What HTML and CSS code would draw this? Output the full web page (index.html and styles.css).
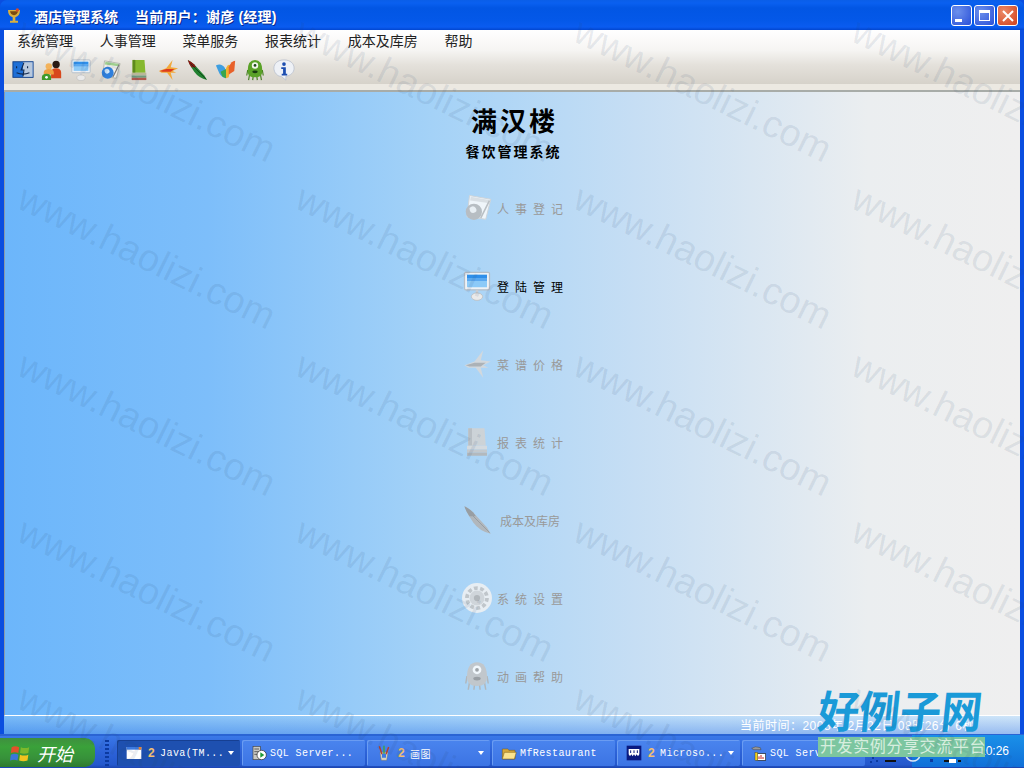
FILE: index.html
```html
<!DOCTYPE html>
<html>
  <head>
    <meta charset="utf-8">
    <title>酒店管理系统</title>
    <link rel="stylesheet" href="styles.css">
  </head>
  <body>
    <svg class="defs" width="0" height="0">
      <symbol id="i-finder" viewBox="0 0 24 24">
        <rect x="1" y="3" width="22" height="17" fill="#1f6fd6" stroke="#123e86"/>
        <rect x="12" y="3.5" width="10.5" height="16" fill="#b9c8dc"/>
        <path d="M13 4 10 12h3l-1 7" fill="none" stroke="#10284f" stroke-width="1.2"/>
        <path d="M5 8v2M17 8v2M5 15q7 3 14 0" fill="none" stroke="#10284f" stroke-width="1.2"/>
      </symbol>
      <symbol id="i-people" viewBox="0 0 24 24">
        <circle cx="16.500" cy="6" r="4" fill="#2a1a14"/>
        <path d="M11 21v-6q0-5 5.500-5t5.500 5v6z" fill="#d8481c"/>
        <circle cx="8.500" cy="8" r="3.500" fill="#f3b25a"/>
        <path d="M3 17v-2q0-4 5.500-4t5.500 4v2z" fill="#eea040"/>
        <path d="M1 23v-3q0-4 5-4t5 4v3z" fill="#3f9a2a"/>
        <circle cx="6" cy="20" r="1.500" fill="#fff"/>
      </symbol>
      <symbol id="i-monitor" viewBox="0 0 24 24">
        <rect x="2" y="1" width="20" height="14" rx="1" fill="#eef2f6" stroke="#b4bec8"/>
        <rect x="4" y="3" width="16" height="10" fill="#8ccaf8"/>
        <rect x="4" y="3" width="16" height="3" fill="#2f8fea"/>
        <rect x="4" y="6" width="16" height="2" fill="#5aa8f0"/>
        <rect x="11" y="15" width="2" height="3" fill="#c8ccd2"/>
        <ellipse cx="12" cy="20.500" rx="4.500" ry="3" fill="#eaeaea" stroke="#bcbcbc" stroke-width=".6"/>
      </symbol>
      <symbol id="i-notes" viewBox="0 0 24 24">
        <path d="M6 2 23 5 19 21 4 19z" fill="#f1f1ec" stroke="#a4a89c" stroke-width=".8"/>
        <path d="M7 3 22 5.500 21 8 6.500 6z" fill="#9fcf8f"/>
        <path d="M22 6 15 20" stroke="#777" stroke-width="1.300"/>
        <circle cx="9.500" cy="15" r="6.500" fill="#2e7fdc"/>
        <path d="M6 12q3-3 5 0t-2 4q-3 0-3-4" fill="#cfe6fb"/>
      </symbol>
      <symbol id="i-book" viewBox="0 0 24 24">
        <path d="M5 1h13l1 14H5z" fill="#86b82e"/>
        <path d="M5 1h3v14H5z" fill="#5e8a1c"/>
        <path d="M4 15h16v3H4z" fill="#b9b69a"/>
        <path d="M4 18h16v2.500H4z" fill="#6f9a7c"/>
        <path d="M4 20.500h16V23H4z" fill="#b0584c"/>
      </symbol>
      <symbol id="i-fish" viewBox="0 0 24 24">
        <path d="M2 13 10 10 17 1 15 9 23 10 17 13 21 15 15 15 17 23 11 15 5 15z" fill="#f2a83a"/>
        <path d="M3 13 10 11 19 11 15 14 6 14z" fill="#dd3b1e"/>
      </symbol>
      <symbol id="i-feather" viewBox="0 0 24 24">
        <path d="M2 1Q6 3 9 6L20 18 23 23Q14 21 9 14T2 1z" fill="#20802f"/>
        <path d="M2 1Q6 3 9 6L11 9 6 9Q3 5 2 1z" fill="#8c1414"/>
        <path d="M5 5 22 22" stroke="#0c3a14" stroke-width=".8"/>
      </symbol>
      <symbol id="i-msn" viewBox="0 0 24 24">
        <path d="M1 7Q7 4 11 10L12 21Q6 20 4 14z" fill="#3f9fe0"/>
        <path d="M6 14 12 11 12 21 8 19z" fill="#3aa64a"/>
        <path d="M12 10Q15 4 17 8L15 20 12 21z" fill="#f3b030"/>
        <path d="M15 9Q18 2 22 2L21 13 15 17z" fill="#e8612a"/>
      </symbol>
      <symbol id="i-mike" viewBox="0 0 24 24">
        <path d="M6 17 5 23M10 19 9.500 23M14 19 14.500 23M18 17 19 23M4 12 3 18M20 12 21 18" stroke="#3f7a1a" stroke-width="1.200"/>
        <path d="M4 13Q4 1 12 1t8 12q0 7-8 7t-8-7z" fill="#5aa228"/>
        <circle cx="12" cy="7" r="3.500" fill="#f2f6ee"/>
        <circle cx="12" cy="7" r="1.500" fill="#1b4a18"/>
        <ellipse cx="12" cy="14" rx="3" ry="1.500" fill="#173a10"/>
      </symbol>
      <symbol id="i-info" viewBox="0 0 24 24">
        <path d="M12 1C5 1 1 5 1 10s4 9 8 9l5 4v-4c5-1 9-4 9-9S19 1 12 1z" fill="#eef1f6" stroke="#b4bccb" stroke-width=".8"/>
        <circle cx="12" cy="5.500" r="2" fill="#1d4eb0"/>
        <path d="M9 9h5v7h1.500v2h-6v-2H11v-5H9z" fill="#1d4eb0"/>
      </symbol>
      <symbol id="i-gear" viewBox="0 0 24 24">
        <circle cx="12" cy="12" r="12" fill="#e0e0e0"/>
        <circle cx="12" cy="12" r="8" fill="none" stroke="#888" stroke-width="3" stroke-dasharray="3 2"/>
        <circle cx="12" cy="12" r="6" fill="#aaa"/>
        <circle cx="12" cy="12" r="2.500" fill="#666"/>
      </symbol>
      <symbol id="i-trophy" viewBox="0 0 24 24">
        <path d="M3 3h18q0 9-7 11v5h4v3H6v-3h4v-5Q3 12 3 3z" fill="#d8b040"/>
        <path d="M6 5h12q-1 5-6 6-5-1-6-6z" fill="#7a4a10"/>
        <circle cx="17" cy="3" r="2.500" fill="#d84a2a"/>
      </symbol>
      <symbol id="i-win" viewBox="0 0 24 24">
        <path d="M2 5Q6 3 11 5L10 12Q6 10 1 12z" fill="#e2512a"/>
        <path d="M13 5Q18 7 23 5L22 12Q17 14 12 12z" fill="#7cb82c"/>
        <path d="M1 14Q6 12 10 14L9 21Q5 19 0 21z" fill="#3c76d8"/>
        <path d="M12 14Q17 16 22 14L21 21Q16 23 11 21z" fill="#f2c31e"/>
      </symbol>
      <symbol id="i-app" viewBox="0 0 24 24">
        <rect x="1" y="3" width="22" height="18" fill="#fff"/>
        <rect x="1" y="3" width="22" height="4" fill="#3d7ae0"/>
        <rect x="19" y="3" width="4" height="4" fill="#e8812a"/>
      </symbol>
      <symbol id="i-server" viewBox="0 0 24 24">
        <rect x="3" y="2" width="11" height="20" fill="#c8c8c4" stroke="#444"/>
        <path d="M5 6h7M5 10h7M5 14h7" stroke="#444" stroke-width="1.200"/>
        <circle cx="16" cy="15" r="7" fill="#fff" stroke="#222"/>
        <path d="M14 11l6 4-6 4z" fill="#1f9a36"/>
      </symbol>
      <symbol id="i-paint" viewBox="0 0 24 24">
        <path d="M6 11h12l-2 12H8z" fill="#d9d4c0" stroke="#7a7460" stroke-width=".6"/>
        <path d="M9 14 5 2M15 14l4-11" stroke-width="2.200" fill="none" stroke="#b8402a"/>
        <path d="M12 14V1" stroke="#3aa64a" stroke-width="2.200"/>
        <path d="M9 13h6v6H9z" fill="#3d7ae0"/>
      </symbol>
      <symbol id="i-folder" viewBox="0 0 24 24">
        <path d="M2 6h8l2 2h9v13H2z" fill="#d6a83a" stroke="#7d5c12" stroke-width=".8"/>
        <path d="M5 11h18l-3 10H2z" fill="#fbe38e" stroke="#7d5c12" stroke-width=".8"/>
      </symbol>
      <symbol id="i-word" viewBox="0 0 24 24">
        <rect x="1" y="1" width="22" height="22" fill="#0a1a80"/>
        <path d="M4 6h16v8l-2 3-2-3-2 3-2-3-2 3-2-3-2 3-2-3z" fill="#fff"/>
        <path d="M7 8v4M12 8v4M17 8v4" stroke="#0a1a80" stroke-width="1.500"/>
      </symbol>
      <symbol id="i-hammer" viewBox="0 0 24 24">
        <rect x="9" y="13" width="13" height="10" fill="#fff" stroke="#222"/>
        <path d="M12 21v-4M15 21v-6M18 21v-3" stroke="#c81e1e" stroke-width="1.500"/>
        <rect x="6" y="11" width="4" height="12" fill="#f2d020" stroke="#333" stroke-width=".6"/>
        <path d="M1 5Q6 1 14 4L15 7 4 7z" fill="#999" stroke="#333" stroke-width=".6"/>
      </symbol>
    </svg>

    <div class="window">
      <div class="titlebar">
        <svg class="title-icon"><use href="#i-trophy"/></svg>
        <span class="title-text">酒店管理系统</span>
        <span class="title-user">当前用户：谢彦 (经理)</span>
        <div class="win-btns">
          <div class="win-btn"><span class="glyph-min"></span></div>
          <div class="win-btn"><span class="glyph-max"></span></div>
          <div class="win-btn close">
            <svg class="glyph-close" viewBox="0 0 12 12"><path d="M1 1 11 11M11 1 1 11"/></svg>
          </div>
        </div>
      </div>
      <div class="frame">
        <div class="chrome">
          <div class="menubar">
            <span class="menu-item">系统管理</span>
            <span class="menu-item">人事管理</span>
            <span class="menu-item">菜单服务</span>
            <span class="menu-item">报表统计</span>
            <span class="menu-item">成本及库房</span>
            <span class="menu-item">帮助</span>
          </div>
          <div class="toolbar">
            <svg class="tool"><use href="#i-finder"/></svg>
            <svg class="tool"><use href="#i-people"/></svg>
            <svg class="tool"><use href="#i-monitor"/></svg>
            <svg class="tool"><use href="#i-notes"/></svg>
            <svg class="tool"><use href="#i-book"/></svg>
            <svg class="tool"><use href="#i-fish"/></svg>
            <svg class="tool"><use href="#i-feather"/></svg>
            <svg class="tool"><use href="#i-msn"/></svg>
            <svg class="tool"><use href="#i-mike"/></svg>
            <svg class="tool"><use href="#i-info"/></svg>
          </div>
          <div class="chrome-strip"></div>
        </div>
        <div class="main">
          <div class="logo">满汉楼</div>
          <div class="logo-sub">餐饮管理系统</div>
          <div class="nav">
            <div class="nav-item off"><svg class="nav-icon"><use href="#i-notes"/></svg><span class="nav-label">人事登记</span></div>
            <div class="nav-item"><svg class="nav-icon"><use href="#i-monitor"/></svg><span class="nav-label">登陆管理</span></div>
            <div class="nav-item off"><svg class="nav-icon"><use href="#i-fish"/></svg><span class="nav-label">菜谱价格</span></div>
            <div class="nav-item off"><svg class="nav-icon"><use href="#i-book"/></svg><span class="nav-label">报表统计</span></div>
            <div class="nav-item off"><svg class="nav-icon"><use href="#i-feather"/></svg><span class="nav-label tight">成本及库房</span></div>
            <div class="nav-item off"><svg class="nav-icon"><use href="#i-gear"/></svg><span class="nav-label">系统设置</span></div>
            <div class="nav-item off"><svg class="nav-icon"><use href="#i-mike"/></svg><span class="nav-label">动画帮助</span></div>
          </div>
        </div>
        <div class="statusbar">当前时间：2008年 2月22日 08时26分 6秒</div>
      </div>
    </div>

    <div class="taskbar">
      <div class="start"><svg class="start-flag"><use href="#i-win"/></svg><span class="start-text">开始</span></div>
      <div class="handle"></div>
      <div class="task active"><svg class="task-icon"><use href="#i-app"/></svg><span class="task-num">2</span><span class="task-name">Java(TM...</span><span class="task-arrow"></span></div>
      <div class="task"><svg class="task-icon"><use href="#i-server"/></svg><span class="task-name">SQL Server...</span></div>
      <div class="task"><svg class="task-icon"><use href="#i-paint"/></svg><span class="task-num">2</span><span class="task-name">画图</span><span class="task-arrow"></span></div>
      <div class="task"><svg class="task-icon"><use href="#i-folder"/></svg><span class="task-name">MfRestaurant</span></div>
      <div class="task"><svg class="task-icon"><use href="#i-word"/></svg><span class="task-num">2</span><span class="task-name">Microso...</span><span class="task-arrow"></span></div>
      <div class="task"><svg class="task-icon"><use href="#i-hammer"/></svg><span class="task-name">SQL Server...</span></div>
      <div class="tray"><span class="clock">10:26</span></div>
    </div>

    <svg class="tray-bits" viewBox="0 0 95 8">
      <path d="M4 1h2v2H4zM8 4h2v2H8zM2 5h2v2H2z" fill="#0c3aa0"/>
      <path d="M17 4h11v2H17z" fill="#111"/>
      <path d="M38 0q2 5 7 5t7-5" fill="none" stroke="#dfe8f4" stroke-width="1.500"/>
      <path d="M62 3h3v3h-3z" fill="#0c3aa0"/>
      <path d="M76 4h5v2h-5z" fill="#111"/>
      <path d="M81 3h7v4h-7z" fill="#fff"/>
      <path d="M90 4h3v2h-3z" fill="#111"/>
    </svg>

    <div class="brand">
      <div class="brand-name">好例子网</div>
      <div class="brand-tag">开发实例分享交流平台</div>
    </div>

    <div id="marks" class="marks"></div>
    <script>
      // watermark grid over the whole shot
      var marks = document.getElementById("marks");
      [15, 293, 571, 849].forEach(function(x) {
        [8, 175, 342, 508, 675].forEach(function(y) {
          var s = document.createElement("span");
          s.className = "mark";
          s.textContent = "www.haolizi.com";
          s.style.left = x + "px";
          s.style.top = y + "px";
          marks.appendChild(s);
        });
      });
    </script>
  </body>
</html>
```

FILE: styles.css
```css
* {
  box-sizing: border-box;
}

html, body {
  margin: 0;
  height: 768px;
  overflow: hidden;
}

body {
  position: relative;
  display: flex;
  flex-direction: column;
  font-family: "Liberation Sans", "Noto Sans CJK SC", sans-serif;
  font-size: 12px;
}

.defs {
  position: absolute;
}

.window {
  height: 734px;
  display: flex;
  flex-direction: column;
  background: #0a4ee0;
}

.titlebar {
  height: 30px;
  flex: none;
  display: flex;
  align-items: center;
  padding: 1px 6px 0 6px;
  color: #fff;
  font-weight: bold;
  font-size: 14px;
  text-shadow: 1px 1px 0 #0a2a90;
  border-radius: 7px 7px 0 0;
  background: linear-gradient(#0a5ee8 0, #0a60f0 3px, #0256e4 8px, #0458e8 20px, #0a5cf0 27px, #0246d0 30px);
}

.title-icon {
  width: 16px;
  height: 16px;
  margin-right: 12px;
}

.title-user {
  margin-left: 17px;
  letter-spacing: .2px;
}

.win-btns {
  margin-left: auto;
  display: flex;
  gap: 2px;
}

.win-btn {
  width: 21px;
  height: 21px;
  border: 1px solid #fff;
  border-radius: 3px;
  background: radial-gradient(circle at 30% 30%, #6c90ec, #2a50d8);
  display: flex;
  align-items: center;
  justify-content: center;
}

.win-btn.close {
  background: radial-gradient(circle at 30% 30%, #ec8a68, #d0401c);
}

.glyph-min {
  width: 7px;
  height: 3px;
  background: #fff;
  margin: 10px 6px 0 0;
}

.glyph-max {
  width: 11px;
  height: 11px;
  border: 1px solid #fff;
  border-top-width: 3px;
}

.glyph-close {
  width: 12px;
  height: 12px;
  fill: none;
  stroke: #fff;
  stroke-width: 2;
}

.frame {
  flex: 1;
  min-height: 0;
  margin: 0 4px;
  display: flex;
  flex-direction: column;
}

.chrome {
  flex: none;
  background: linear-gradient(#fff 0, #f6f5f3 20px, #e4e1db 35px, #d6d2ca 54px);
}

.menubar {
  height: 19px;
  display: flex;
  align-items: center;
  padding-left: 13px;
  gap: 26.7px;
  font-size: 14px;
  color: #222;
}

.toolbar {
  height: 35px;
  display: flex;
  align-items: center;
  padding: 6px 0 0 8px;
  gap: 7px;
}

.tool {
  width: 22px;
  height: 22px;
}

.chrome-strip {
  height: 8px;
  background: #ece9e2;
  border-bottom: 2px solid #a8aca8;
}

.main {
  flex: 1;
  min-height: 0;
  display: flex;
  flex-direction: column;
  align-items: center;
  padding-top: 14px;
  border-left: 1px solid #8a9aa8;
  border-bottom: 1px solid #fff;
  background: linear-gradient(90deg, #6cb6fb 0, #7dbefa 20%, #a4d2f7 42%, #c6def4 62%, #ebeef0 85%, #efefef 100%);
}

.logo {
  font-size: 26px;
  font-weight: bold;
  letter-spacing: 3px;
  line-height: 32px;
  color: #000;
  margin-left: 4px;
}

.logo-sub {
  font-size: 14px;
  font-weight: bold;
  letter-spacing: 2px;
  line-height: 20px;
  margin: 4px 0 0 2px;
  color: #000;
}

.nav {
  display: flex;
  flex-direction: column;
  gap: 48px;
  margin-top: 31px;
  margin-left: 1px;
}

.nav-item {
  height: 30px;
  width: 102px;
  display: flex;
  align-items: center;
  gap: 5px;
  color: #000;
}

.nav-icon {
  width: 30px;
  height: 30px;
  flex: none;
}

.nav-label {
  letter-spacing: 6px;
  white-space: nowrap;
}

.nav-label.tight {
  letter-spacing: 0;
  margin-left: 3px;
}

.nav-item.off {
  color: #999;
}

.nav-item.off .nav-icon {
  filter: grayscale(1) contrast(.35) brightness(1.5) opacity(.85);
}

.statusbar {
  height: 18px;
  flex: none;
  text-align: right;
  padding-right: 45px;
  line-height: 20px;
  letter-spacing: .5px;
  color: #fff;
  white-space: nowrap;
  background: linear-gradient(rgba(255, 255, 255, .12), rgba(30, 90, 220, .28)), linear-gradient(90deg, #68b2f6 0, #90c8f8 40%, #b4d8f8 70%, #c8e2f8 100%);
}

.taskbar {
  height: 34px;
  flex: none;
  display: flex;
  align-items: flex-end;
  gap: 2px;
  border-top: 2px solid #2a64d4;
  padding-bottom: 1px;
  color: #fff;
  background: linear-gradient(#3a78e8 0, #2c62d8 50%, #2458cc 90%, #1c44b0 100%);
}

.start {
  width: 95px;
  height: 29px;
  flex: none;
  display: flex;
  align-items: center;
  padding-left: 10px;
  gap: 7px;
  border-radius: 0 10px 10px 0;
  background: linear-gradient(#3f8f3f, #3aa13a 30%, #37913a 70%, #2e7a2e);
}

.start-flag {
  width: 20px;
  height: 20px;
}

.start-text {
  font-size: 18px;
  font-style: italic;
}

.handle {
  width: 4px;
  height: 26px;
  margin: 0 6px 1px 8px;
  background: repeating-linear-gradient(#0c3aa0 0 2px, transparent 2px 4px);
}

.task {
  width: 123px;
  height: 26px;
  flex: none;
  display: flex;
  align-items: center;
  padding: 0 6px 0 9px;
  gap: 3px;
  margin-bottom: 1px;
  border-radius: 2px;
  font-family: "Liberation Mono", "Noto Sans CJK SC", monospace;
  font-size: 10px;
  letter-spacing: .4px;
  white-space: nowrap;
  overflow: hidden;
  background: linear-gradient(#4a84ee, #3c74e4);
  box-shadow: inset 1px 1px 0 #6a9cf2;
}

.task.active {
  background: #1e50b0;
  box-shadow: inset 1px 1px 0 #163f92;
}

.task-icon {
  width: 16px;
  height: 16px;
  flex: none;
}

.task-num {
  font-family: "Liberation Sans", sans-serif;
  font-weight: bold;
  font-size: 12px;
  color: #f4c070;
  margin: 0 2px 0 3px;
}

.task-arrow {
  margin-left: auto;
  border: 3px solid transparent;
  border-top: 4px solid #fff;
  border-bottom: 0;
}

.tray {
  flex: 1;
  height: 32px;
  display: flex;
  align-items: center;
  justify-content: flex-end;
  padding-right: 15px;
  margin-left: 45px;
  font-size: 12px;
  background: linear-gradient(#1a90e8, #1070d8);
}

.tray-bits {
  position: absolute;
  left: 868px;
  top: 756px;
  width: 95px;
  height: 8px;
}

.brand {
  position: absolute;
  left: 818px;
  top: 689px;
  width: 167px;
}

.brand-name {
  font-size: 41px;
  font-weight: bold;
  line-height: 48px;
  color: #1a9ad8;
  white-space: nowrap;
  transform: skewX(-6deg) scaleY(1.08);
}

.brand-tag {
  height: 20px;
  line-height: 20px;
  font-size: 16px;
  letter-spacing: .6px;
  padding-left: 2px;
  white-space: nowrap;
  color: rgba(240, 250, 240, .8);
  background: #7cc6a0;
  overflow: hidden;
}

.marks {
  position: absolute;
  inset: 0;
  overflow: hidden;
  pointer-events: none;
}

.mark {
  position: absolute;
  font-family: "Liberation Sans", sans-serif;
  font-size: 38px;
  line-height: 38px;
  white-space: nowrap;
  color: rgba(40, 70, 110, 0.1);
  transform-origin: 0 32px;
  transform: rotate(26deg);
}
```
